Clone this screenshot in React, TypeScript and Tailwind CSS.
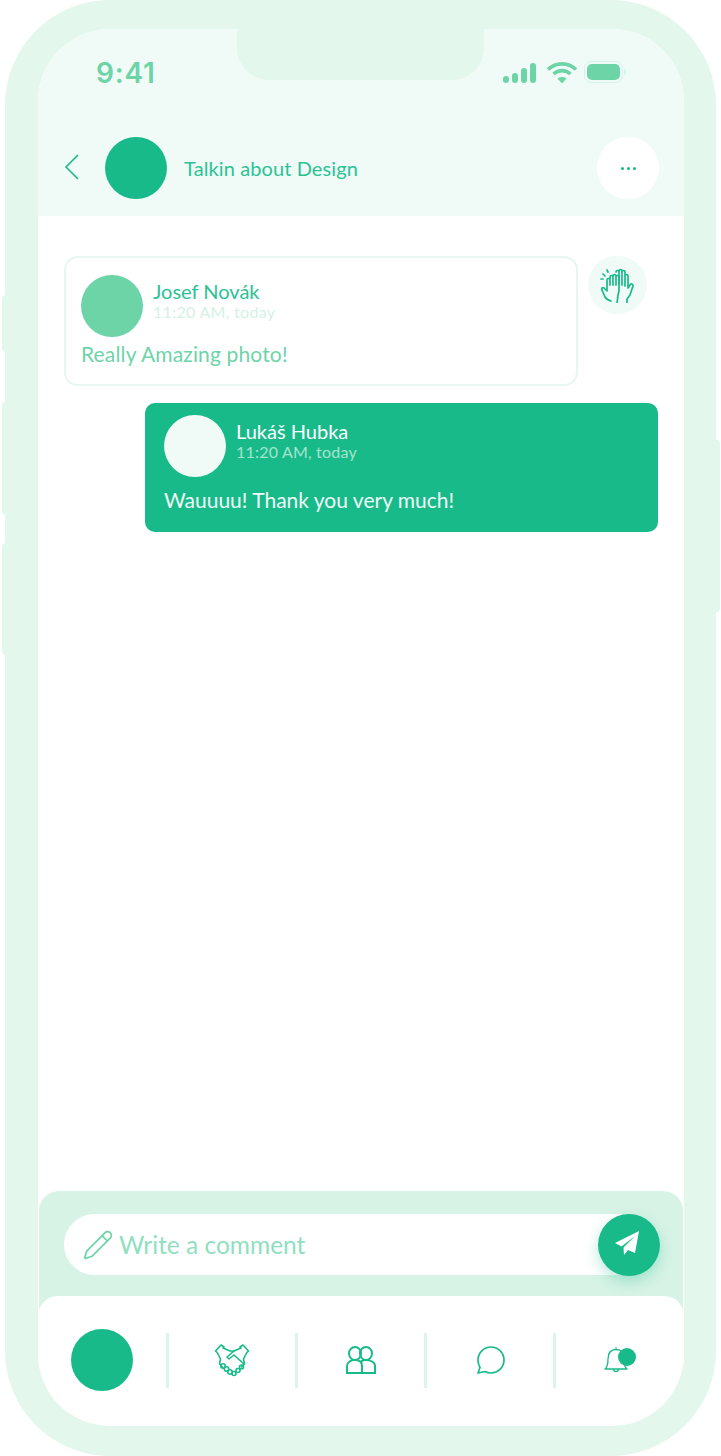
import React from "react";
import { Pencil } from "lucide-react";

const font = { fontFamily: '"Lato", "Noto Sans", sans-serif' };

function HighFive() {
  return (
    <svg width="36" height="36" viewBox="0 0 36 36" fill="none" stroke="#18ba8a" strokeWidth="1.7" strokeLinecap="round" strokeLinejoin="round">
      <path d="M2 23l3 7c1 2 3 3 6 4M2 23c-1-2 1-3 2-2l3 3V13c0-2 3-2 3 0v5-8c0-2 3-2 3 0v8-9c0-2 3-2 3 0v9-8c0-2 3-2 3 0v14l-1 4-1 8" />
      <path d="M16 5c0-2 3-2 3 0v12-13c0-2 3-2 3 0v14-13c0-2 3-2 3 0v14-10c0-2 3-2 3 0v12l2-3c1-2 3-1 3 1l-3 9-3 4v5" />
      <path d="M3 7l2 2M7 3l1 2M1 12h2" />
    </svg>
  );
}

function HandshakeIcon() {
  return (
    <svg width="36" height="34" viewBox="0 0 36 34" fill="none" stroke="#18ba8a" strokeWidth="1.6" strokeLinecap="round" strokeLinejoin="round">
      <path d="M1.500 8L7 2l3 2-1 1 7 3h4l7-3-1-1 3-2 5.500 6-2 2-3 6 1 5-3 3M1.500 8l2 2 3 6-1 5 3 3" />
      <path d="M20 8l-7 6 2 2 5-4 10 9" />
      <circle cx="9" cy="23" r="2.200" />
      <circle cx="12.500" cy="26" r="2.200" />
      <circle cx="16" cy="29" r="2.200" />
      <circle cx="20" cy="30.500" r="2" />
      <circle cx="24" cy="27.500" r="2" />
      <circle cx="27.500" cy="24" r="2" />
    </svg>
  );
}

function Friends() {
  return (
    <svg width="32" height="30" viewBox="0 0 32 30" fill="none" stroke="#18ba8a" strokeWidth="2" strokeLinejoin="round">
      <ellipse cx="10" cy="8.500" rx="6" ry="6.500" />
      <ellipse cx="21" cy="8.500" rx="6" ry="6.500" />
      <path d="M2 28v-7c0-4 4-6 8-6s7 2 7 6v7M16 17c1-2 3-2 5-2 4 0 9 2 9 6v7M1 28h30" />
    </svg>
  );
}

function Chat() {
  return (
    <svg width="30" height="30" viewBox="0 0 30 30" fill="none" stroke="#18ba8a" strokeWidth="1.700" strokeLinejoin="round">
      <path d="M2 28l2-5.500C2.700 20.300 2 18 2 15 2 7.800 7.800 2 15 2s13 5.800 13 13-5.800 13-13 13c-2.200 0-4.200-.5-6-1.500z" />
    </svg>
  );
}

function BellDot() {
  return (
    <div className="relative w-[32px] h-[28px]">
      <svg width="24" height="28" viewBox="0 0 24 28" fill="none" stroke="#18ba8a" strokeWidth="1.300" strokeLinejoin="round">
        <path d="M1 23c2.500-2 3-5 3-10 0-6 3-9.500 8-9.500s8 3.500 8 9.500c0 5 .5 8 3 10z" />
        <path d="M12 3.500V1.500M9.500 23a2.500 2.500 0 0 0 5 0" />
      </svg>
      <div className="absolute left-[14px] top-[2px] w-[18px] h-[18px] rounded-full bg-[#18ba8a]" />
    </div>
  );
}

function Signal() {
  return (
    <div className="flex items-end gap-[3px] h-[20px]">
      <div className="w-[6px] h-[7px] rounded-sm bg-[#6dd4a8]" />
      <div className="w-[6px] h-[10px] rounded-sm bg-[#6dd4a8]" />
      <div className="w-[6px] h-[15px] rounded-sm bg-[#6dd4a8]" />
      <div className="w-[6px] h-[20px] rounded-sm bg-[#6dd4a8]" />
    </div>
  );
}

function Wifi() {
  return (
    <svg width="32" height="24" viewBox="0 0 32 24" fill="none" stroke="#6dd4a8" strokeWidth="3.600">
      <path d="M2 8.500c8-7.500 20-7.500 28 0" />
      <path d="M7.500 13c5-4.500 12-4.500 17 0" />
      <path d="M16 22.500l-4.500-5c2.500-2 6.500-2 9 0z" fill="#6dd4a8" stroke="none" />
    </svg>
  );
}

function Battery() {
  return (
    <div className="flex items-center">
      <div className="w-[39px] h-[22px] rounded-[7px] border border-[#d7f3e6] p-[2px]">
        <div className="w-full h-full rounded-[5px] bg-[#6dd4a8]" />
      </div>
      <div className="ml-[1px] w-[2px] h-[6px] rounded-r-sm bg-[#d7f3e6]" />
    </div>
  );
}

function SendPlane() {
  return (
    <svg width="26" height="26" viewBox="0 0 26 26" fill="#ffffff" className="-mt-[3px] -ml-[4px]">
      <path d="M25 1L1 13l6.500 3.500L21 6 9.500 17.500 10 25l4-5 7 3z" />
    </svg>
  );
}

function Divider() {
  return <div className="w-[3px] h-[55px] bg-[#dcf5eb]" />;
}

function NavSlot({ children }: { children: React.ReactNode }) {
  return <div className="flex-1 flex items-center justify-center">{children}</div>;
}

export default function App() {
  return (
    <div className="relative w-[721px] h-[1456px] bg-white overflow-hidden" style={font}>
      <div className="absolute left-[2px] top-[295px] w-[6px] h-[57px] rounded-l bg-[#e3f7ec]" />
      <div className="absolute left-[2px] top-[402px] w-[6px] h-[113px] rounded-l bg-[#e3f7ec]" />
      <div className="absolute left-[2px] top-[543px] w-[6px] h-[112px] rounded-l bg-[#e3f7ec]" />
      <div className="absolute left-[714px] top-[440px] w-[6px] h-[172px] rounded-r bg-[#e3f7ec]" />

      <div className="relative ml-[5px] w-[711px] h-[1456px] rounded-[105px] bg-[#e3f7ec] pl-[33px] pr-[32px] pt-[29px] pb-[30px]">
        <div className="relative w-[646px] h-full rounded-[72px] bg-white overflow-hidden flex flex-col">
          <div className="h-[187px] shrink-0 bg-[#f0fbf7] flex flex-col">
            <div className="relative h-[108px] shrink-0 flex justify-between pl-[58px] pr-[58px] pt-[31px]">
              <div className="text-[28px] leading-[26px] font-semibold tracking-[0.8px] text-[#6dd4a8]" style={{ fontFamily: '"Inter", sans-serif' }}>9:41</div>
              <div className="absolute left-[199px] top-0 w-[247px] h-[51px] bg-[#e3f7ec] rounded-b-[32px]" />
              <div className="flex items-start pt-[1px]">
                <div className="mt-[2px] mr-[10px]"><Signal /></div>
                <Wifi />
                <div className="ml-[6px]"><Battery /></div>
              </div>
            </div>
            <div className="flex items-start pl-[26px] pr-[25px]">
              <svg width="16" height="26" viewBox="0 0 16 26" fill="none" stroke="#18ba8a" strokeWidth="1.600" className="mt-[17px]">
                <path d="M14 1L2 13l12 12" />
              </svg>
              <div className="ml-[25px] w-[62px] h-[62px] rounded-full bg-[#18ba8a]" />
              <div className="ml-[17px] mt-[19px] text-[20px] leading-[24px] tracking-[0.1px] text-[#2cc295]">Talkin about Design</div>
              <div className="ml-auto w-[62px] h-[62px] rounded-full bg-white flex items-center justify-center gap-[3px]">
                <div className="w-[3px] h-[3px] rounded-full bg-[#18ba8a]" />
                <div className="w-[3px] h-[3px] rounded-full bg-[#18ba8a]" />
                <div className="w-[3px] h-[3px] rounded-full bg-[#18ba8a]" />
              </div>
            </div>
          </div>

          <div className="flex-1 flex flex-col pl-[26px] pr-[26px] pt-[40px]">
            <div className="flex items-start">
              <div className="w-[514px] h-[130px] rounded-[14px] border-2 border-[#e6f7f1] bg-white pl-[15px] pt-[17px]">
                <div className="flex items-start">
                  <div className="w-[62px] h-[62px] rounded-full bg-[#6dd4a8]" />
                  <div className="ml-[10px] pt-[5px]">
                    <div className="text-[20px] leading-[22px] text-[#2cc295]">Josef Novák</div>
                    <div className="mt-[1px] text-[16px] leading-[18px] tracking-[0.3px] text-[#d5f1e6]">11:20 AM, today</div>
                  </div>
                </div>
                <div className="mt-[5px] text-[21px] leading-[24px] tracking-[0.15px] text-[#6dd4a8]">Really Amazing photo!</div>
              </div>
              <div className="ml-[10px] w-[59px] h-[58px] rounded-full bg-[#f0fbf7] flex items-center justify-center">
                <HighFive />
              </div>
            </div>

            <div className="ml-[81px] mt-[17px] w-[513px] h-[129px] rounded-[10px] bg-[#18ba8a] pl-[19px] pt-[12px]">
              <div className="flex items-start">
                <div className="w-[62px] h-[62px] rounded-full bg-[#f0fbf7]" />
                <div className="ml-[10px] pt-[5px]">
                  <div className="text-[20px] leading-[22px] text-white">Lukáš Hubka</div>
                  <div className="mt-[1px] text-[16px] leading-[18px] tracking-[0.2px] text-[#a5e3cd]">11:20 AM, today</div>
                </div>
              </div>
              <div className="mt-[11px] text-[21px] leading-[24px] text-[#f0fbf7]">Wauuuu! Thank you very much!</div>
            </div>
          </div>

          <div className="mx-[1px] shrink-0 bg-[#d7f3e6] rounded-t-[20px]">
            <div className="h-[105px] pl-[25px] pr-[23px] pt-[23px]">
              <div className="flex items-center h-[61px] w-full rounded-full bg-white pl-[18px]">
                <Pencil size={32} color="#6dd4a8" strokeWidth={1.300} />
                <div className="ml-[5px] text-[24.5px] leading-[28px] text-[#8fdfc0]">Write a comment</div>
                <div className="ml-auto w-[62px] h-[62px] rounded-full bg-[#18ba8a] shadow-[0_6px_14px_rgba(24,186,138,0.3)] flex items-center justify-center">
                  <SendPlane />
                </div>
              </div>
            </div>
            <div className="h-[130px] -mx-[1px] rounded-t-[20px] bg-white flex items-center pl-[33px] pb-[2px]">
              <div className="w-[62px] h-[62px] rounded-full bg-[#18ba8a] mr-[33px]" />
              <Divider />
              <NavSlot><HandshakeIcon /></NavSlot>
              <Divider />
              <NavSlot><Friends /></NavSlot>
              <Divider />
              <NavSlot><div className="ml-[2px]"><Chat /></div></NavSlot>
              <Divider />
              <div className="w-[128px] flex items-center justify-center">
                <BellDot />
              </div>
            </div>
          </div>
        </div>
      </div>
    </div>
  );
}
